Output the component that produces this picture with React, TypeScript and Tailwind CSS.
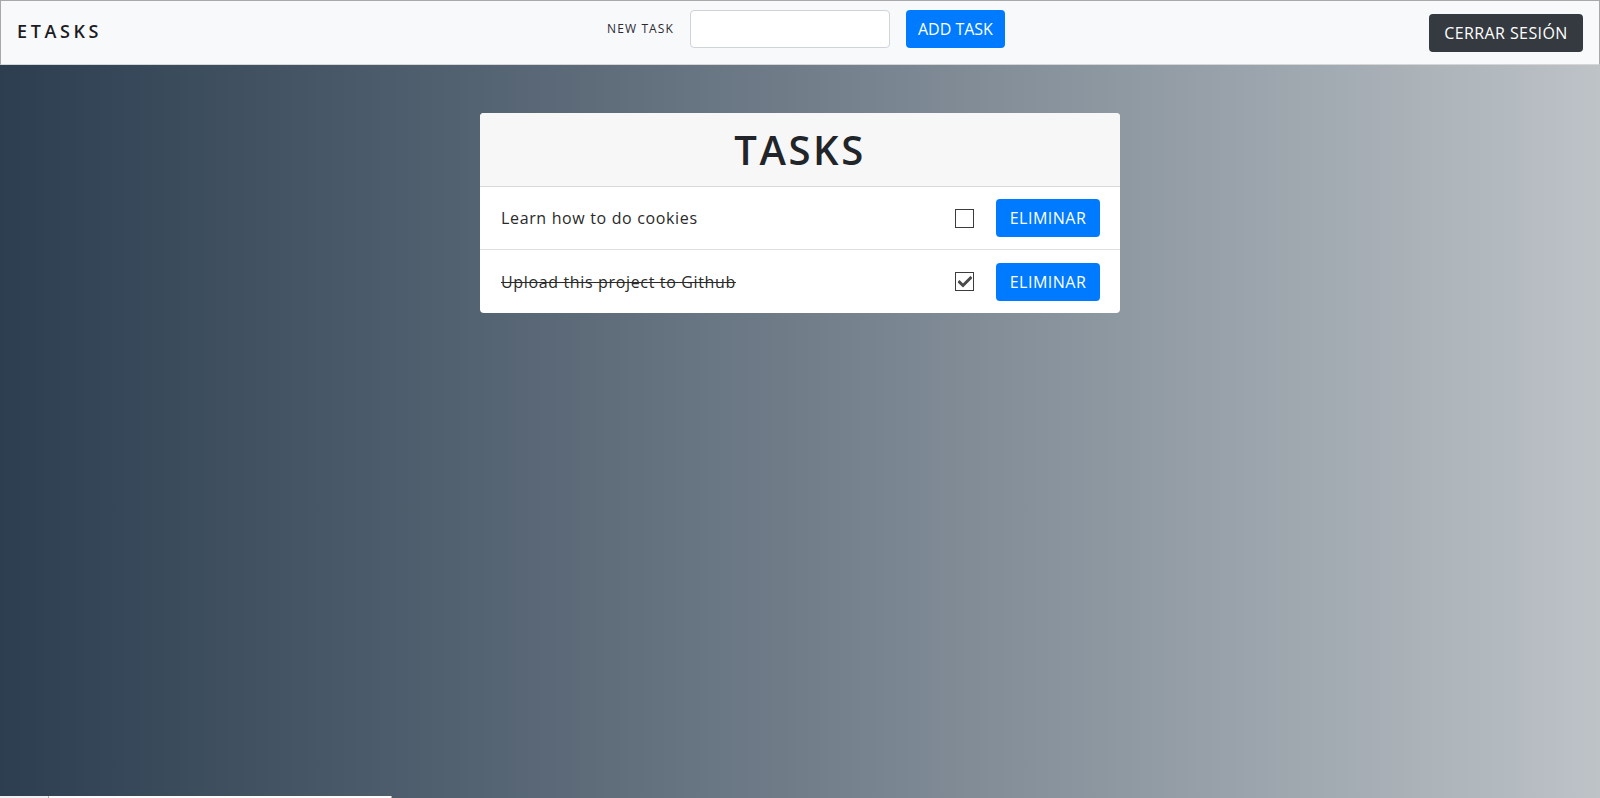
import React from "react";

function Checkbox({ checked }: { checked: boolean }) {
  return (
    <div className="w-[19px] h-[19px] border-[1.5px] border-[#3c3c3c] bg-white flex items-center justify-center">
      {checked && (
        <svg width="14" height="12" viewBox="0 0 14 12">
          <path d="M1.5 6.2 L5 9.5 L12.5 2" fill="none" stroke="#4a4a4a" strokeWidth="3" strokeLinecap="square" />
        </svg>
      )}
    </div>
  );
}

function TaskRow({ text, done, last }: { text: string; done: boolean; last?: boolean }) {
  return (
    <div className={`flex items-center h-[63px] pl-[21px] pr-[20px] ${last ? "" : "border-b border-[#dedede]"}`}>
      <span className={`flex-1 text-[16px] tracking-[0.65px] text-[#2a2a2a] ${done ? "line-through" : ""}`}>{text}</span>
      <Checkbox checked={done} />
      <button className="ml-[22px] w-[104px] h-[38px] rounded-[4px] bg-[#007bff] text-white text-[16px] tracking-[0.5px]">
        ELIMINAR
      </button>
    </div>
  );
}

export default function App() {
  return (
    <div className="w-[1600px] h-[798px] flex flex-col overflow-hidden" style={{ fontFamily: '"Open Sans", "Noto Sans", sans-serif' }}>
      <nav className="h-[65px] shrink-0 bg-[#f8f9fa] border-t border-l border-r border-[#a8a8a8] border-b-[#d6d6d6] border-b flex items-start">
        <div className="flex-1 pl-[16px] pt-[17px]">
          <span className="text-[18px] font-semibold tracking-[3.6px] text-[#1c1c24]">ETASKS</span>
        </div>
        <div className="flex items-center pt-[9px] pl-[12px]">
          <span className="text-[12px] font-medium tracking-[1.1px] text-[#2a2a35]">NEW TASK</span>
          <input className="ml-[16px] w-[200px] h-[38px] bg-white border border-[#cfd4da] rounded-[4px] outline-none px-3" />
          <button className="ml-[16px] w-[99px] h-[38px] rounded-[4px] bg-[#007bff] text-white text-[16px]">ADD TASK</button>
        </div>
        <div className="flex-1 flex justify-end pr-[16px] pt-[13px]">
          <button className="w-[154px] h-[38px] rounded-[4px] bg-[#343a40] text-white text-[16px] tracking-[0.4px]">
            CERRAR SESIÓN
          </button>
        </div>
      </nav>
      <main className="flex-1 bg-gradient-to-r from-[#2c3e50] to-[#bdc3c7] pt-[48px]">
        <div className="mx-auto w-[640px] bg-white rounded-[4px] overflow-hidden">
          <div className="h-[74px] bg-[#f7f7f7] border-b border-[#d9d9d9] flex items-center justify-center">
            <h1 className="text-[40px] font-semibold tracking-[2.6px] text-[#212529] leading-none">TASKS</h1>
          </div>
          <TaskRow text="Learn how to do cookies" done={false} />
          <TaskRow text="Upload this project to Github" done={true} last />
        </div>
      </main>
      <div className="h-[2px] shrink-0 flex bg-gradient-to-r from-[#2c3e50] to-[#bdc3c7]">
        <div className="w-[48px] bg-[#f0f0f0]" />
        <div className="w-[1px] bg-[#b0b0b0]" />
        <div className="w-[342px] bg-[#fafafa]" />
        <div className="w-[1px] bg-[#b0b0b0]" />
      </div>
    </div>
  );
}
